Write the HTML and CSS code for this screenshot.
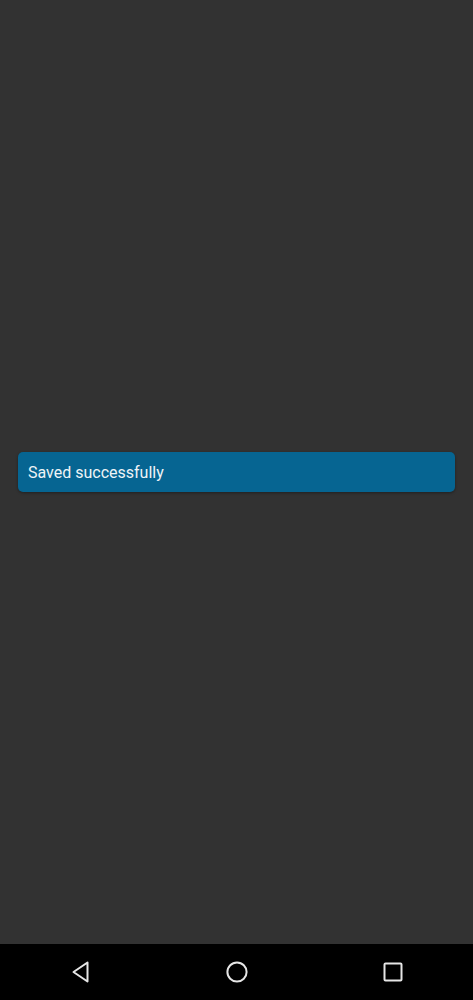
FILE: index.html
```html
<!DOCTYPE html>
<html>
<head>
<meta charset="utf-8">
<link rel="stylesheet" href="styles.css">
</head>
<body>
<div class="screen">
  <main class="content">
    <div class="toast">Saved successfully</div>
  </main>
  <nav class="navbar">
    <div class="nav-cell"><svg class="nav-icon" width="22" height="22" viewBox="0 0 22 22"><path d="M17.5 1.5 L3.5 11 L17.5 20.5 Z" fill="none" stroke="#e6e6e6" stroke-width="2" stroke-linejoin="round"/></svg></div>
    <div class="nav-cell"><svg class="nav-icon" width="22" height="22" viewBox="0 0 22 22"><circle cx="11" cy="11" r="9.6" fill="none" stroke="#e6e6e6" stroke-width="2"/></svg></div>
    <div class="nav-cell"><svg class="nav-icon" width="22" height="22" viewBox="0 0 22 22"><rect x="2.5" y="2.5" width="17" height="17" rx="1" fill="none" stroke="#e6e6e6" stroke-width="2"/></svg></div>
  </nav>
</div>
</body>
</html>
```
FILE: styles.css
```css
html, body {
  margin: 0;
  padding: 0;
  background: #323232;
}
.screen {
  width: 473px;
  height: 1000px;
  display: flex;
  flex-direction: column;
}
.content {
  flex: 1;
  display: flex;
  align-items: center;
  padding: 0 18px;
  background: #323232;
}
.toast {
  flex: 1;
  height: 40px;
  box-sizing: border-box;
  background: #066592;
  border-radius: 5px;
  color: #eef4f7;
  font-family: Roboto, "Noto Sans", sans-serif;
  font-size: 16px;
  line-height: 38px;
  padding: 2px 0 0 10px;
  box-shadow: 0 1px 3px rgba(0,0,0,0.35);
}
.navbar {
  height: 56px;
  background: #000;
  display: flex;
  align-items: center;
  padding: 0 2.5px;
}
.nav-cell {
  flex: 1;
  display: flex;
  justify-content: center;
}
.nav-icon {
  display: block;
}
```
